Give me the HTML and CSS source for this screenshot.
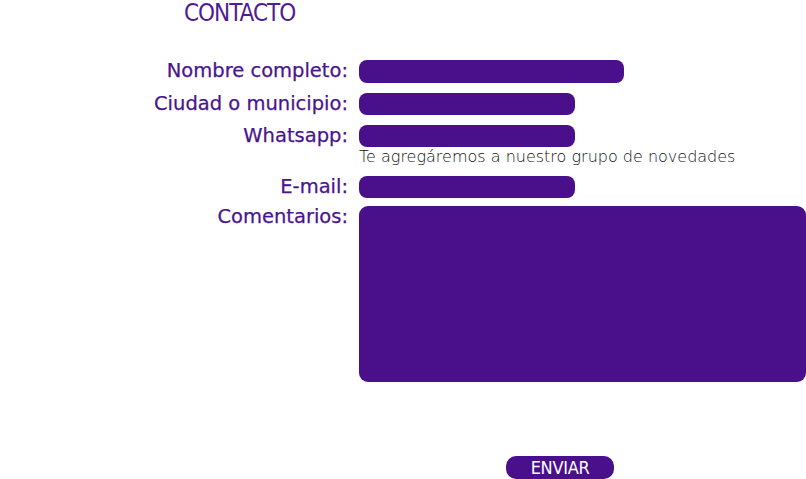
FILE: index.html
```html
<!DOCTYPE html>
<html lang="es">
<head>
<meta charset="utf-8">
<title>Contacto</title>
<link rel="stylesheet" href="styles.css">
</head>
<body>
<div class="page">
  <h1 class="title">CONTACTO</h1>
  <form class="form">
    <label class="label" for="nombre">Nombre completo:</label>
    <div class="cell"><input class="field field-wide" id="nombre" type="text"></div>

    <label class="label" for="ciudad">Ciudad o municipio:</label>
    <div class="cell"><input class="field" id="ciudad" type="text"></div>

    <label class="label" for="whatsapp">Whatsapp:</label>
    <div class="cell">
      <input class="field" id="whatsapp" type="text">
      <p class="help">Te agregáremos a nuestro grupo de novedades</p>
    </div>

    <label class="label" for="email">E-mail:</label>
    <div class="cell"><input class="field" id="email" type="text"></div>

    <label class="label label-comments" for="comentarios">Comentarios:</label>
    <div class="cell"><textarea class="area" id="comentarios"></textarea></div>

    <div class="cell actions"><button class="send" type="button">ENVIAR</button></div>
  </form>
</div>
</body>
</html>
```
FILE: styles.css
```css
html, body {
  margin: 0;
  padding: 0;
  background: #ffffff;
}

.page {
  width: 806px;
  height: 479px;
  overflow: hidden;
  font-family: "DejaVu Sans", "Lato", sans-serif;
}

.title {
  margin: 0 0 0 184px;
  height: 60px;
  font-family: "DejaVu Sans Condensed", "DejaVu Sans", sans-serif;
  font-weight: normal;
  font-size: 24px;
  line-height: 26px;
  color: #4d1c96;
  letter-spacing: -1px;
}

.form {
  display: grid;
  grid-template-columns: 348px 447px;
  column-gap: 11px;
  row-gap: 10px;
  align-items: start;
}

.label {
  text-align: right;
  font-size: 19.5px;
  line-height: 22px;
  color: #4a1490;
  white-space: nowrap;
  -webkit-text-stroke: 0.25px #4a1490;
}

.cell {
  display: flex;
  flex-direction: column;
  align-items: flex-start;
}

.field {
  box-sizing: border-box;
  width: 216px;
  height: 22px;
  margin: 0;
  border: none;
  border-radius: 8px;
  background: #4a108c;
  outline: none;
}

.field-wide {
  width: 265px;
  height: 23px;
}

.help {
  margin: 0;
  font-family: "DejaVu Sans", sans-serif;
  font-size: 16px;
  line-height: 19px;
  font-weight: 200;
  color: #111111;
  white-space: nowrap;
}

.area {
  box-sizing: border-box;
  width: 447px;
  height: 176px;
  margin: -2px 0 0 0;
  border: none;
  border-radius: 9px;
  background: #4a108c;
  resize: none;
  outline: none;
}

.label-comments {
  margin-top: -2px;
}

.actions {
  grid-column: 2;
  padding-top: 64px;
  padding-left: 147px;
}

.send {
  width: 108px;
  height: 23px;
  padding: 0;
  border: none;
  border-radius: 10px;
  background: #4a108c;
  color: #ffffff;
  font-family: "DejaVu Sans Condensed", "DejaVu Sans", sans-serif;
  font-size: 18px;
  line-height: 23px;
  letter-spacing: -0.3px;
}
```
